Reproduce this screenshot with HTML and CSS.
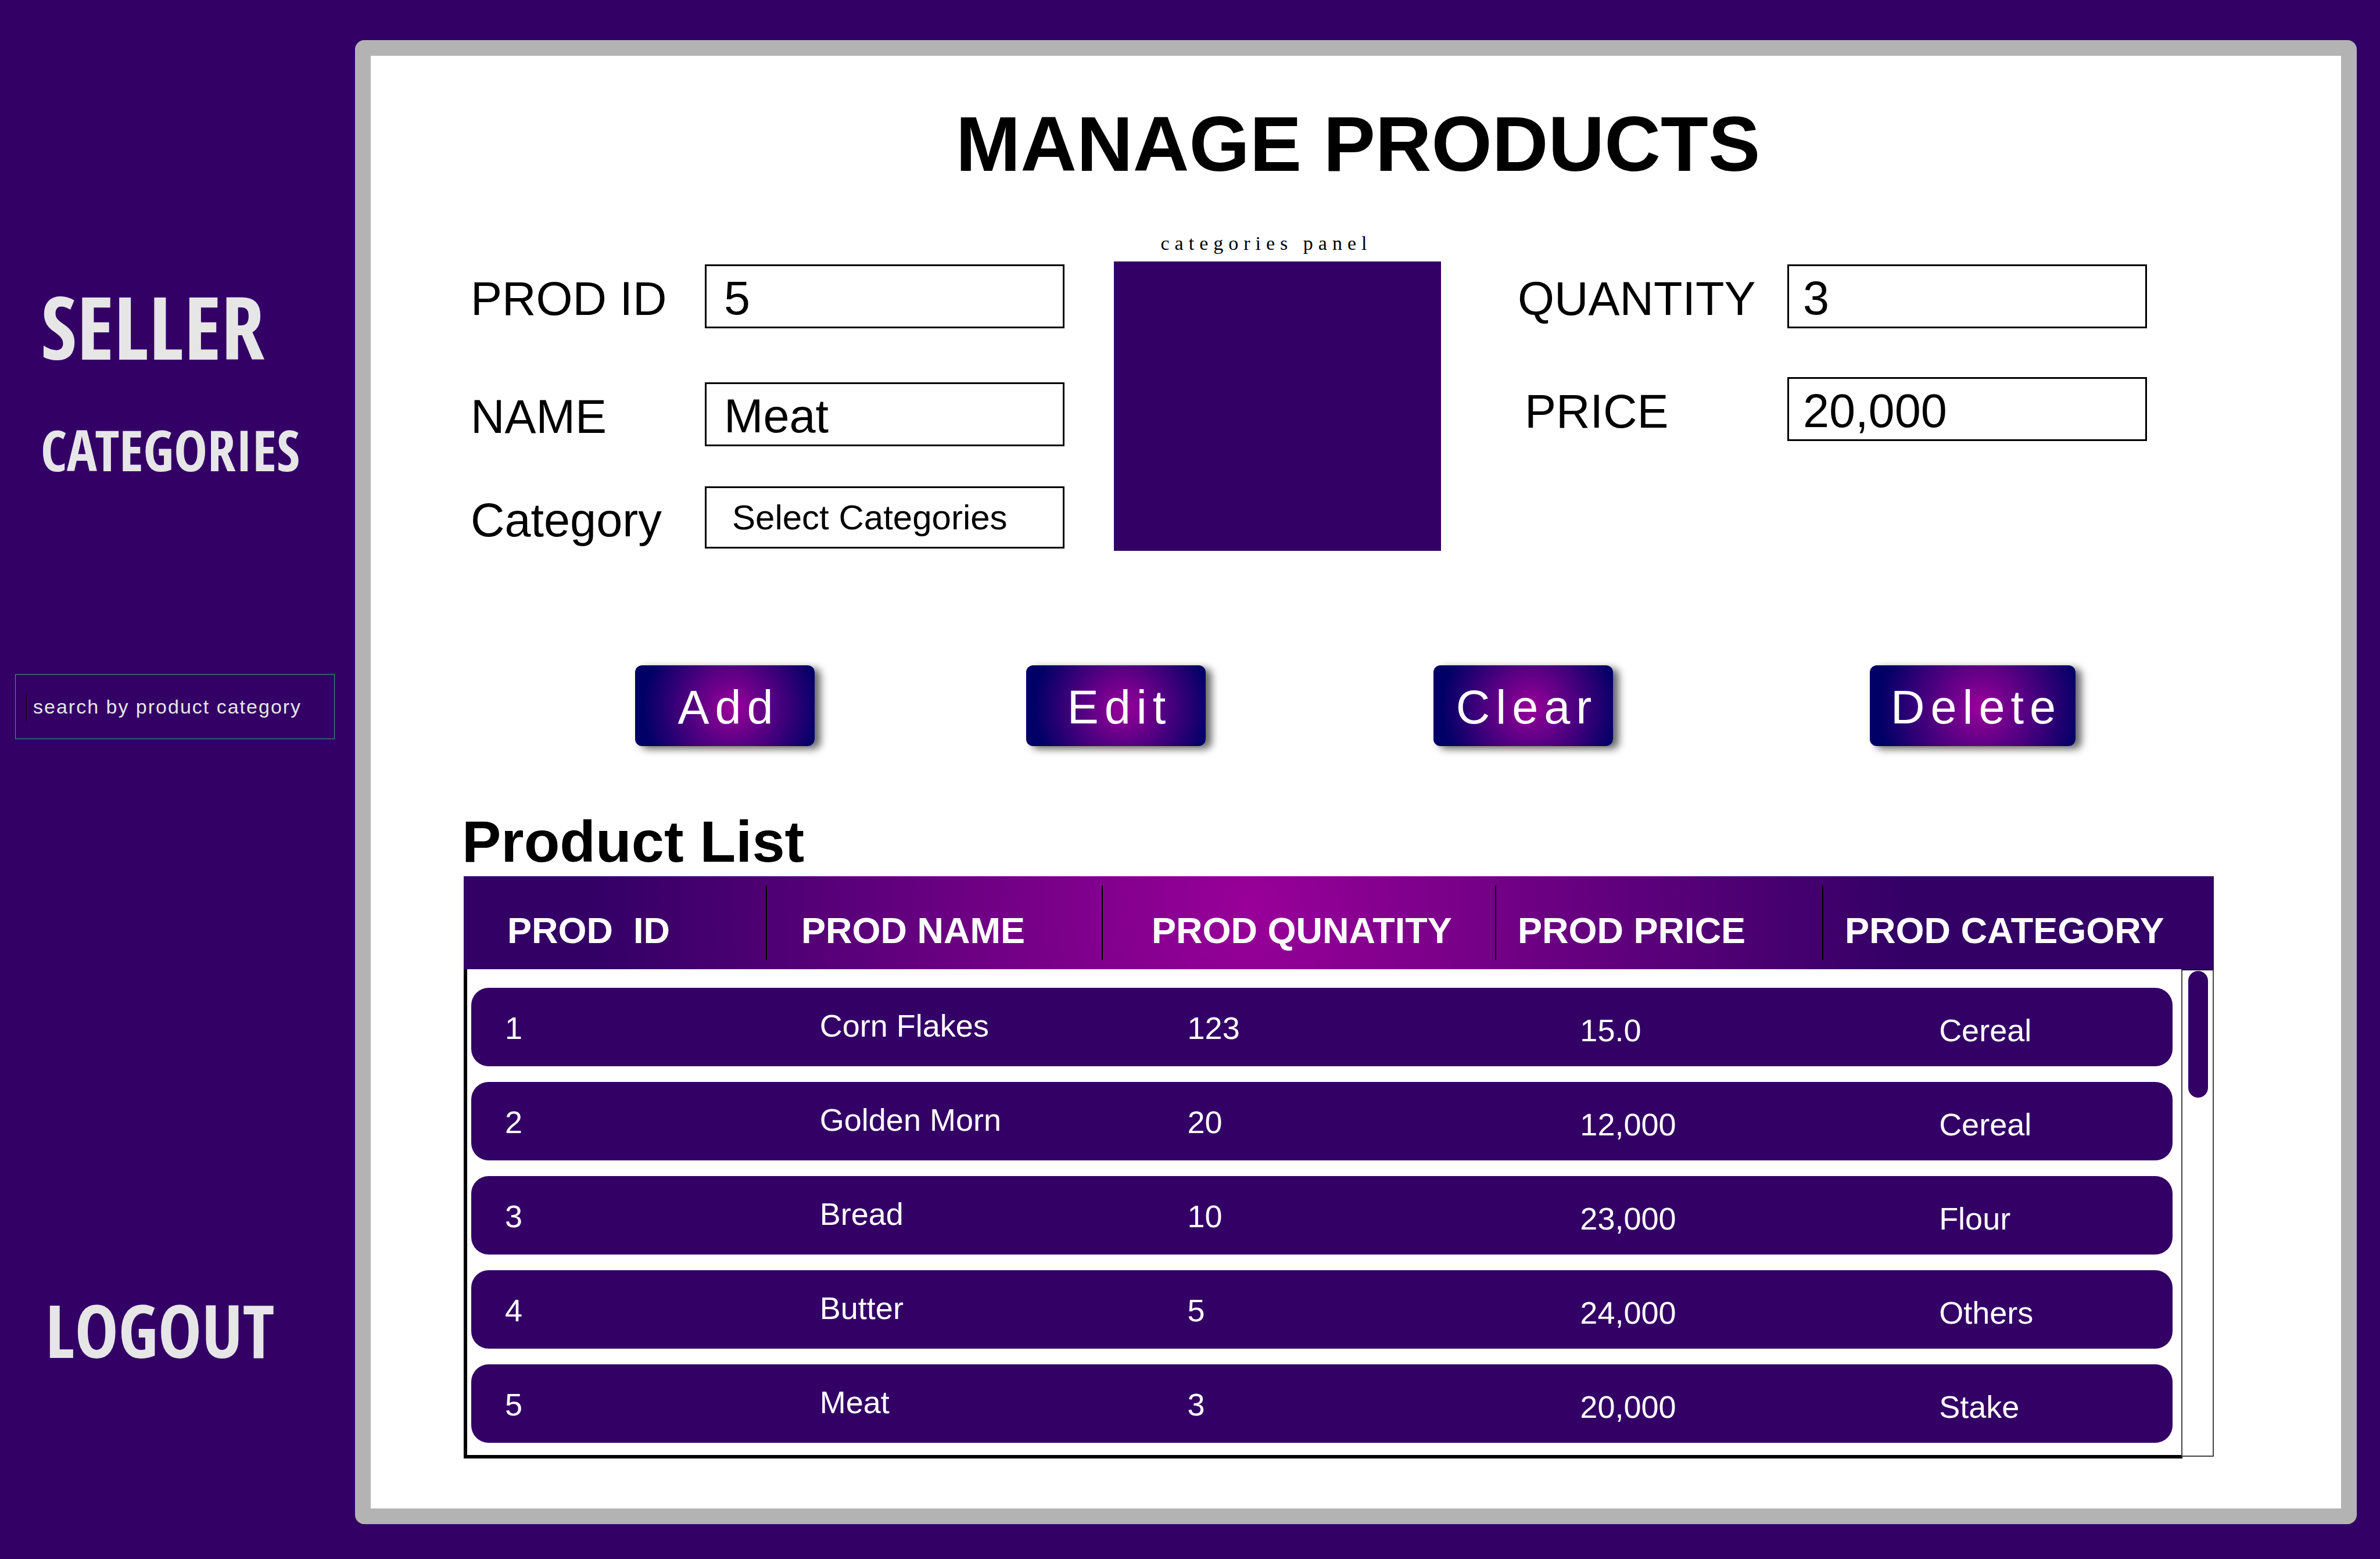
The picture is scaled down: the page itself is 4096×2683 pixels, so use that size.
FILE: index.html
```html
<!DOCTYPE html>
<html lang="en">
<head>
<meta charset="utf-8">
<meta name="viewport" content="width=device-width, initial-scale=1">
<title>Manage Products</title>
<link rel="stylesheet" href="styles.css">
</head>
<body>
<div class="app">
  <nav class="rail">
    <a class="rail-link rail-link--seller" href="#seller">SELLER</a>
    <a class="rail-link rail-link--categories" href="#categories">CATEGORIES</a>
    <input class="search" type="search" aria-label="Search by product category" placeholder="search by product category">
    <a class="rail-link rail-link--logout" href="#logout">LOGOUT</a>
  </nav>

  <main class="page">
    <h1 class="page-title">MANAGE PRODUCTS</h1>

    <form class="product-form" onsubmit="return false">
      <div class="form-grid">
        <div class="fields fields--left">
          <div class="field">
            <label for="prod-id">PROD ID</label>
            <input id="prod-id" type="text" value="5">
          </div>
          <div class="field">
            <label for="name">NAME</label>
            <input id="name" type="text" value="Meat">
          </div>
          <div class="field field--category">
            <label for="category">Category</label>
            <select id="category">
              <option>Select Categories</option>
              <option>Cereal</option>
              <option>Flour</option>
              <option>Stake</option>
              <option>Others</option>
            </select>
          </div>
        </div>

        <figure class="panel">
          <figcaption>categories panel</figcaption>
          <div class="panel-body"></div>
        </figure>

        <div class="fields fields--right">
          <div class="field">
            <label for="quantity">QUANTITY</label>
            <input id="quantity" type="text" value="3">
          </div>
          <div class="field field--price">
            <label for="price">PRICE</label>
            <input id="price" type="text" value="20,000">
          </div>
        </div>
      </div>

      <div class="actions">
        <button class="btn" type="button">Add</button>
        <button class="btn" type="button">Edit</button>
        <button class="btn" type="button">Clear</button>
        <button class="btn btn--wide" type="button">Delete</button>
      </div>
    </form>

    <h2 class="list-title" id="list-title">Product List</h2>
    <div class="list">
      <table class="products" aria-labelledby="list-title">
        <thead>
          <tr>
            <th scope="col">PROD&nbsp; ID</th>
            <th scope="col">PROD NAME</th>
            <th scope="col">PROD QUNATITY</th>
            <th scope="col">PROD PRICE</th>
            <th scope="col">PROD CATEGORY</th>
          </tr>
        </thead>
        <tbody>
          <tr><td>1</td><td>Corn Flakes</td><td>123</td><td>15.0</td><td>Cereal</td></tr>
          <tr><td>2</td><td>Golden Morn</td><td>20</td><td>12,000</td><td>Cereal</td></tr>
          <tr><td>3</td><td>Bread</td><td>10</td><td>23,000</td><td>Flour</td></tr>
          <tr><td>4</td><td>Butter</td><td>5</td><td>24,000</td><td>Others</td></tr>
          <tr><td>5</td><td>Meat</td><td>3</td><td>20,000</td><td>Stake</td></tr>
        </tbody>
      </table>
      <div class="scroll-track"><div class="scroll-thumb"></div></div>
    </div>
  </main>
</div>
</body>
</html>
```

FILE: styles.css
```css
:root {
  --purple: #330066;
  --magenta: #990099;
  --navy: #000066;
  --mist: #e6e6e6;
  --frame: #b3b3b3;
  --sans: "Liberation Sans", Arial, Helvetica, sans-serif;
  --display: "Noto Sans ExtraCondensed", "Open Sans Condensed", "Roboto Condensed", sans-serif;
}

* {
  box-sizing: border-box;
}

body {
  margin: 0;
  background: var(--purple);
  color: #000;
  font-family: var(--sans);
}

input,
select,
button {
  margin: 0;
  font-family: inherit;
  color: inherit;
  appearance: none;
  border-radius: 0;
}

.app {
  display: grid;
  grid-template-columns: 611px 1fr;
  min-height: 100vh;
  padding-right: 40px;
}

/* Side rail */

.rail {
  display: flex;
  flex-direction: column;
  align-items: flex-start;
  padding: 473px 35px 320px 26px;
}

.rail-link {
  padding-left: 44px;
  color: var(--mist);
  font-family: var(--display);
  font-weight: 900;
  text-decoration: none;
}

.rail-link--seller {
  font-size: 150px;
  line-height: 176px;
}

.rail-link--categories {
  margin-top: 78px;
  font-size: 97px;
  line-height: 92px;
}

.rail-link--logout {
  margin-top: auto;
  padding-left: 52px;
  font-size: 126px;
  line-height: 150px;
}

.search {
  width: 100%;
  height: 112px;
  margin-top: 341px;
  padding: 0 20px 0 30px;
  border: 1px solid #3f9f83;
  background: linear-gradient(#0d001a, #0d001a) 18px center / 1px 52px no-repeat;
  color: var(--mist);
  font-size: 34px;
  letter-spacing: 2px;
}

.search::placeholder {
  color: var(--mist);
  opacity: 1;
}

/* Page */

.page {
  margin: 69px 0 60px;
  padding: 77px 219px 60px 160px;
  border: 27px solid var(--frame);
  border-radius: 16px;
  background: #fff;
}

.page-title {
  margin: 0 -66px 76px 0;
  font-size: 134px;
  line-height: 150px;
  text-align: center;
}

/* Form */

.form-grid {
  display: grid;
  grid-template-columns: 1022px 563px 1130px;
  column-gap: 85px;
  padding-left: 12px;
  justify-content: start;
  align-items: start;
}

.fields {
  padding-top: 56px;
}

.fields--right {
  padding-left: 47px;
}

.field {
  display: flex;
  align-items: center;
  justify-content: space-between;
}

.field + .field {
  margin-top: 93px;
}

.field + .field--category {
  margin-top: 69px;
}

.field + .field--price {
  margin-top: 84px;
}

.field label {
  padding-top: 8px;
  font-size: 81px;
  line-height: 92px;
}

.field--price label {
  padding-left: 12px;
}

.field input,
.field select {
  width: 619px;
  height: 110px;
  padding: 6px 20px 0 30px;
  border: 3px solid #000;
  background: #fff;
  font-size: 81px;
}

.fields--right input {
  padding-left: 24px;
}

.field select {
  height: 107px;
  padding: 0 20px 0 44px;
  font-size: 60px;
}

.panel {
  margin: 0;
}

.panel figcaption {
  margin-bottom: 11px;
  padding-right: 38px;
  font-family: "Liberation Serif", "Times New Roman", serif;
  font-size: 34px;
  line-height: 40px;
  letter-spacing: 9px;
  text-align: center;
}

.panel-body {
  height: 498px;
  background: var(--purple);
}

.actions {
  display: grid;
  grid-template-columns: 673fr 701fr 751fr 592fr;
  justify-items: start;
  margin-top: 197px;
  padding-left: 295px;
}

.btn {
  width: 309px;
  height: 139px;
  padding: 6px 0 0 12px;
  border: 0;
  border-radius: 12px;
  background: radial-gradient(circle farthest-side at 54% 52%, var(--magenta), var(--navy) 92%);
  box-shadow: 10px 5px 14px rgba(0, 0, 0, 0.6);
  color: #fff;
  font-size: 81px;
  letter-spacing: 10px;
}

.btn--wide {
  width: 354px;
}

/* Product list */

.list-title {
  margin: 109px 0 5px -3px;
  font-size: 101px;
  line-height: 110px;
}

.list {
  display: grid;
  grid-template-columns: 1fr 56px;
  grid-template-rows: 160px 1fr;
}

.products {
  grid-area: 1 / 1 / -1 / -1;
  display: block;
  color: #fff;
}

.products thead,
.products tbody {
  display: block;
}

.products thead tr {
  display: grid;
  grid-template-columns: 522fr 578fr 677fr 563fr 672fr;
  height: 160px;
  padding: 16px 0;
  background: radial-gradient(circle 1130px at 45% 33%, var(--magenta), var(--purple));
}

.products th {
  padding: 28px 0 0 37px;
  border-right: 2px solid #000;
  font-size: 63px;
  line-height: 98px;
  text-align: left;
  white-space: nowrap;
}

.products th:nth-child(1) {
  padding-left: 75px;
}

.products th:nth-child(2) {
  padding-left: 59px;
}

.products th:nth-child(3) {
  padding-left: 84px;
}

.products th:last-child {
  border-right: 0;
}

.products tbody {
  display: flex;
  flex-direction: column;
  gap: 27px;
  margin-right: 54px;
  padding: 32px 17px 21px 7px;
  border: solid #000;
  border-width: 0 0 6px 6px;
}

.products tbody tr {
  display: grid;
  grid-template-columns: 542fr 633fr 676fr 618fr 402fr;
  height: 135px;
  padding-left: 58px;
  border-radius: 30px;
  background: var(--purple);
}

.products td {
  padding: 4px 0 0;
  font-size: 54px;
  line-height: 131px;
}

.products td:nth-child(2) {
  padding-top: 0;
}

.products td:nth-child(n + 4) {
  padding-top: 8px;
}

.scroll-track {
  grid-area: 2 / 2;
  margin-bottom: 3px;
  padding: 1px 8px 1px 10px;
  border: 2px solid #444;
  border-top-color: #1a0033;
}

.scroll-thumb {
  height: 218px;
  border-radius: 17px;
  background: var(--purple);
}
```
